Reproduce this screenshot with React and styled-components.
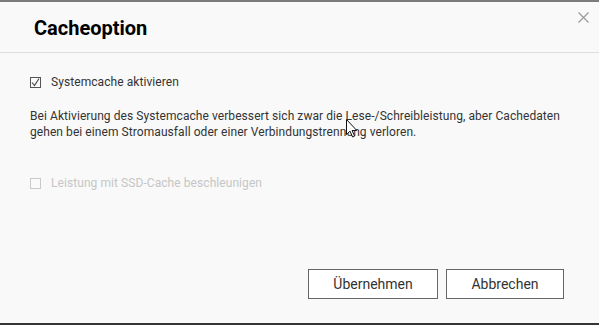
import React from 'react';
import styled, { createGlobalStyle } from 'styled-components';

const GlobalStyle = createGlobalStyle`
  html, body {
    margin: 0;
    padding: 0;
    background: #353535;
  }
  body {
    font-family: Roboto, "Liberation Sans", Arial, sans-serif;
  }
`

const Dialog = styled.div`
  position: relative;
  width: 599px;
  height: 323px;
  box-sizing: border-box;
  background: #f9f9f9;
  border-top: 2px solid #7c7c7c;
  display: flex;
  flex-direction: column;
`

const Header = styled.div`
  display: flex;
  align-items: flex-start;
  justify-content: space-between;
  padding: 14px 10px 12px 34px;
  border-bottom: 1px solid #dedede;
`

const Title = styled.h1`
  margin: 0;
  font-size: 20px;
  line-height: 24px;
  font-weight: 700;
  color: #000;
`

const CloseButton = styled.button`
  border: 0;
  background: none;
  padding: 0;
  margin: -4px 0 0 0;
  width: 11px;
  height: 11px;
  display: flex;
  cursor: pointer;
`

const Body = styled.div`
  flex: 1;
  padding: 21px 30px 0 30px;
`

const CheckRow = styled.label`
  display: flex;
  align-items: center;
  gap: 10px;
  font-size: 12px;
  line-height: 16px;
  letter-spacing: 0.07px;
  color: ${p => (p.disabled ? '#c6c6c6' : '#333')};
  margin-top: ${p => p.$top || 0}px;
`

const Box = styled.span`
  width: 11px;
  height: 11px;
  box-sizing: border-box;
  border: 1px solid ${p => (p.disabled ? '#c9c9c9' : '#555')};
  background: #fafafa;
  display: flex;
  align-items: center;
  justify-content: center;
`

const Text = styled.p`
  margin: 18px 0 0 0;
  font-size: 12px;
  line-height: 16px;
  letter-spacing: 0.07px;
  color: #333;
`

const Footer = styled.div`
  display: flex;
  justify-content: flex-end;
  gap: 8px;
  padding: 0 35px 24px 0;
`

const Button = styled.button`
  height: 30px;
  width: ${p => p.w}px;
  box-sizing: border-box;
  border: 1px solid #666;
  background: #fff;
  color: #333;
  font-family: Roboto, "Liberation Sans", Arial, sans-serif;
  font-size: 14px;
  padding: 0;
  cursor: pointer;
`

const Pointer = styled.svg`
  position: absolute;
  left: 346px;
  top: 117px;
  pointer-events: none;
`

function Check({ checked, disabled, children, top }) {
  return (
    <CheckRow disabled={disabled} $top={top}>
      <Box disabled={disabled}>
        {checked && (
          <svg width="9" height="9" viewBox="0 0 9 9">
            <path d="M1 4.5 L3.5 7.5 L8 0.5" fill="none" stroke="#444" strokeWidth="1.1" />
          </svg>
        )}
      </Box>
      {children}
    </CheckRow>
  );
}

export default function App() {
  return (
    <>
      <GlobalStyle />
      <Dialog>
        <Header>
          <Title>Cacheoption</Title>
          <CloseButton aria-label="Schließen">
            <svg width="11" height="11" viewBox="0 0 11 11">
              <path d="M0.5 0.5 L10.5 10.5 M10.5 0.5 L0.5 10.5" stroke="#9a9a9a" strokeWidth="1.2" />
            </svg>
          </CloseButton>
        </Header>
        <Body>
          <Check checked>Systemcache aktivieren</Check>
          <Text>
            Bei Aktivierung des Systemcache verbessert sich zwar die Lese-/Schreibleistung, aber Cachedaten
            gehen bei einem Stromausfall oder einer Verbindungstrennung verloren.
          </Text>
          <Check disabled top={35}>Leistung mit SSD-Cache beschleunigen</Check>
        </Body>
        <Footer>
          <Button w={130}>Übernehmen</Button>
          <Button w={118}>Abbrechen</Button>
        </Footer>
        <Pointer width="12" height="19" viewBox="0 0 12 19">
          <path d="M0.5 0.5 L0.5 15.5 L4 12.2 L6.6 18 L8.6 17.1 L6.1 11.5 L10.8 11.5 Z" fill="#fff" stroke="#111" strokeWidth="1" />
        </Pointer>
      </Dialog>
    </>
  );
}
